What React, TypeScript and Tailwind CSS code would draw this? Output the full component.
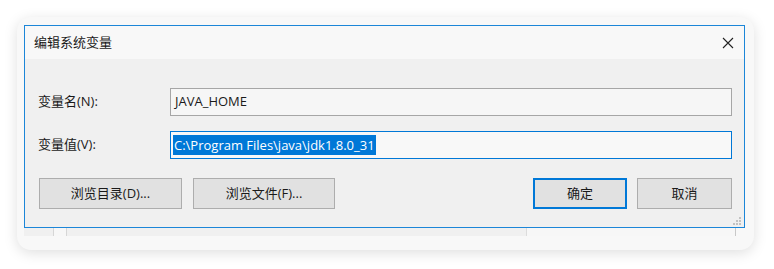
import React from "react";

const font = { fontFamily: '"Open Sans", "Noto Sans CJK SC", sans-serif' };

function Btn({ label, w, primary }: { label: string; w: string; primary?: boolean }) {
  return (
    <div
      className={`${w} h-[31px] flex items-center justify-center text-[13px] text-[#1a1a1a] bg-[#e1e1e1] ${
        primary ? "border-2 border-[#0078d7]" : "border border-[#adadad]"
      }`}
    >
      {label}
    </div>
  );
}

export default function App() {
  return (
    <div className="w-[774px] h-[269px] bg-white pt-[17px] pl-[17px]" style={font}>
      <div className="w-[737px] h-[233px] rounded-[14px] bg-[#f8f8f8] shadow-[0_3px_14px_rgba(0,0,0,0.13)] pt-[8px] pl-[7px] overflow-hidden">
        <div className="w-[721px] h-[203px] border border-[#1c86d8] flex flex-col">
          {/* title bar */}
          <div className="h-[33px] bg-[#f8f8f8] flex items-center justify-between pl-[9px] pr-[10px]">
            <span className="text-[13px] text-[#1a1a1a]">编辑系统变量</span>
            <svg width="12" height="12" viewBox="0 0 12 12">
              <path d="M1 1 L11 11 M11 1 L1 11" stroke="#222" strokeWidth="1.1" fill="none" />
            </svg>
          </div>
          {/* body */}
          <div className="flex-1 bg-[#f0f0f0] flex flex-col pt-[29px] pr-[12px] relative">
            <div className="flex items-center h-[28px]">
              <div className="w-[145px] pl-[13px] text-[13px] text-[#1a1a1a]">变量名(N):</div>
              <div className="flex-1 h-[28px] border border-[#a6a6a6] bg-[#f6f6f6] flex items-center pl-[4px] text-[13px] text-[#1a1a1a]">
                JAVA_HOME
              </div>
            </div>
            <div className="flex items-center h-[28px] mt-[15px]">
              <div className="w-[145px] pl-[13px] text-[13px] text-[#1a1a1a]">变量值(V):</div>
              <div className="flex-1 h-[28px] border border-[#0078d7] bg-[#f8f8f8] flex items-center pl-[2px] text-[13px]">
                <span className="bg-[#0078d7] text-white leading-[20px] px-[1px]">C:\Program Files\java\jdk1.8.0_31</span>
              </div>
            </div>
            <div className="flex items-center mt-[19px]">
              <div className="ml-[14px]">
                <Btn label="浏览目录(D)..." w="w-[143px]" />
              </div>
              <div className="ml-[11px]">
                <Btn label="浏览文件(F)..." w="w-[142px]" />
              </div>
              <div className="ml-auto">
                <Btn label="确定" w="w-[94px]" primary />
              </div>
              <div className="ml-[10px]">
                <Btn label="取消" w="w-[95px]" />
              </div>
            </div>
            <svg width="8" height="8" viewBox="0 0 8 8" className="absolute right-[3px] bottom-[2px]">
              <rect x="6" y="0" width="2" height="2" fill="#c2c2c2" />
              <rect x="3" y="3" width="2" height="2" fill="#c2c2c2" />
              <rect x="6" y="3" width="2" height="2" fill="#c2c2c2" />
              <rect x="0" y="6" width="2" height="2" fill="#c2c2c2" />
              <rect x="3" y="6" width="2" height="2" fill="#c2c2c2" />
              <rect x="6" y="6" width="2" height="2" fill="#c2c2c2" />
            </svg>
          </div>
        </div>
        {/* underlying window strip */}
        <div className="w-[712px] h-[8px] flex bg-[#f0f0f0]">
          <div className="w-[29px]" />
          <div className="w-[14px] border-l border-r border-[#d6d6d6] bg-[#f7f7f7]" />
          <div className="w-[459px]" />
          <div className="w-[1px] bg-[#dcdcdc]" />
          <div className="flex-1 border-r border-[#c8c8c8] bg-[#f7f7f7]" />
        </div>
      </div>
    </div>
  );
}
